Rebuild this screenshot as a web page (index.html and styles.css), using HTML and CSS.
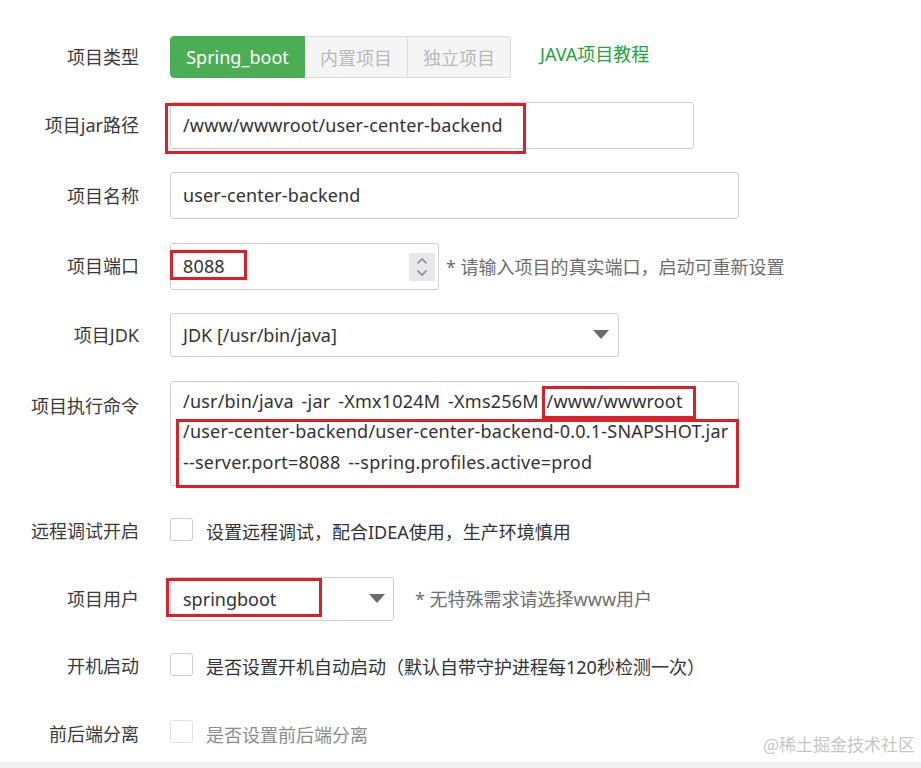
FILE: index.html
```html
<!DOCTYPE html>
<html lang="zh-CN">
<head>
<meta charset="utf-8">
<title>项目设置</title>
<link rel="stylesheet" href="styles.css">
</head>
<body>
<div class="page">
  <form class="form">
    <div class="row r-type">
      <label class="lbl">项目类型</label>
      <div class="ctrl">
        <div class="btn-group">
          <span class="btn active">Spring_boot</span>
          <span class="btn">内置项目</span>
          <span class="btn">独立项目</span>
        </div>
        <a class="tutorial">JAVA项目教程</a>
      </div>
    </div>

    <div class="row r-jar">
      <label class="lbl">项目jar路径</label>
      <div class="ctrl">
        <div class="field">
          <div class="input w-jar">/www/wwwroot/user-center-backend</div>
          <span class="mark mark-jar"></span>
        </div>
      </div>
    </div>

    <div class="row r-name">
      <label class="lbl">项目名称</label>
      <div class="ctrl">
        <div class="input w-name">user-center-backend</div>
      </div>
    </div>

    <div class="row r-port">
      <label class="lbl">项目端口</label>
      <div class="ctrl">
        <div class="field">
          <div class="input w-port">8088</div>
          <span class="spinner">
            <svg width="14" height="22" viewBox="0 0 14 22"><path d="M2.5 7.5 L7 3 L11.5 7.5" fill="none" stroke="#8a8a8a" stroke-width="1.6"/><path d="M2.5 14.5 L7 19 L11.5 14.5" fill="none" stroke="#8a8a8a" stroke-width="1.6"/></svg>
          </span>
          <span class="mark mark-port"></span>
        </div>
        <span class="hint">* 请输入项目的真实端口，启动可重新设置</span>
      </div>
    </div>

    <div class="row r-jdk">
      <label class="lbl">项目JDK</label>
      <div class="ctrl">
        <div class="select w-jdk">JDK [/usr/bin/java]<span class="caret"></span></div>
      </div>
    </div>

    <div class="row r-cmd">
      <label class="lbl lbl-top">项目执行命令</label>
      <div class="ctrl">
        <div class="field">
          <div class="textarea w-cmd">
            <div class="line">/usr/bin/java -jar -Xmx1024M -Xms256M <span class="hl">/www/wwwroot</span></div>
            <div class="line">/user-center-backend/user-center-backend-0.0.1-SNAPSHOT.jar</div>
            <div class="line">--server.port=8088 --spring.profiles.active=prod</div>
          </div>
          <span class="mark mark-cmd2"></span>
        </div>
      </div>
    </div>

    <div class="row r-check">
      <label class="lbl">远程调试开启</label>
      <div class="ctrl">
        <span class="checkbox"></span>
        <span class="check-text">设置远程调试，配合IDEA使用，生产环境慎用</span>
      </div>
    </div>

    <div class="row r-user">
      <label class="lbl">项目用户</label>
      <div class="ctrl">
        <div class="field">
          <div class="select w-user">springboot<span class="caret"></span></div>
          <span class="mark mark-user"></span>
        </div>
        <span class="hint hint-user">* 无特殊需求请选择www用户</span>
      </div>
    </div>

    <div class="row r-check">
      <label class="lbl">开机启动</label>
      <div class="ctrl">
        <span class="checkbox"></span>
        <span class="check-text">是否设置开机自动启动（默认自带守护进程每120秒检测一次）</span>
      </div>
    </div>

    <div class="row r-check">
      <label class="lbl">前后端分离</label>
      <div class="ctrl">
        <span class="checkbox light"></span>
        <span class="check-text muted">是否设置前后端分离</span>
      </div>
    </div>
  </form>
  <div class="watermark">@稀土掘金技术社区</div>
</div>
<div class="strip"></div>
</body>
</html>
```

FILE: styles.css
```css
* { box-sizing: border-box; }
html, body { margin: 0; padding: 0; background: #fff; }
body {
  font-family: "Noto Sans", "Noto Sans CJK SC", sans-serif;
  font-size: 18px;
  color: #333;
  width: 921px;
  height: 768px;
  overflow: hidden;
}
.page {
  position: relative;
  height: 762px;
  padding-top: 36px;
}
.strip { height: 6px; background: #f0f0f0; }
.form {
  display: flex;
  flex-direction: column;
  gap: 23.5px;
}
.row {
  display: flex;
  align-items: center;
}
.lbl {
  width: 139px;
  flex: none;
  text-align: right;
  color: #3a3a3a;
  line-height: 30px;
  white-space: nowrap;
  margin-right: 31px;
}
.lbl-top { align-self: flex-start; padding-top: 10px; }
.ctrl {
  display: flex;
  align-items: center;
}
.field { position: relative; }

/* button group */
.btn-group { display: flex; height: 42px; }
.btn {
  display: flex;
  align-items: center;
  justify-content: center;
  width: 103px;
  height: 42px;
  background: #f5f5f5;
  border: 1px solid #dcdcdc;
  border-left: none;
  color: #b9b9b9;
}
.btn:last-child { border-radius: 0 4px 4px 0; }
.btn.active {
  width: 135px;
  background: #4cae54;
  border: 1px solid #4cae54;
  color: #fff;
  border-radius: 4px 0 0 4px;
}
.tutorial {
  margin-left: 29px;
  margin-top: -8px;
  color: #20a53a;
}

/* inputs */
.input, .select, .textarea {
  border: 1px solid #cfcfcf;
  border-radius: 3px;
  background: #fff;
  color: #333;
  padding: 0 12px;
  white-space: nowrap;
}
.input { height: 47px; line-height: 45px; letter-spacing: 0.15px; }
.w-jar { width: 524px; }
.w-name { width: 569px; }
.w-port { width: 269px; }
.select {
  position: relative;
  height: 44px;
  line-height: 42px;
}
.w-jdk { width: 449px; }
.w-user { width: 224px; }
.caret {
  position: absolute;
  right: 9px;
  top: 16px;
  width: 0; height: 0;
  border-left: 8.5px solid transparent;
  border-right: 8.5px solid transparent;
  border-top: 9px solid #6b6b6b;
}
.w-user .caret { right: 8px; }
.textarea {
  width: 569px;
  height: 105px;
  padding: 4px 12px;
}
.line {
  line-height: 30.5px;
  white-space: nowrap;
  letter-spacing: 0.2px;
  word-spacing: 3px;
}
.hl {
  position: relative;
  display: inline-block;
}
.hl::after {
  content: "";
  position: absolute;
  left: -5px;
  right: -13px;
  top: 0;
  bottom: -3px;
  border: 3px solid #d8222b;
}

.spinner {
  position: absolute;
  right: 4px;
  top: 10px;
  width: 26px;
  height: 28px;
  background: #e8e8ec;
  display: flex;
  align-items: center;
  justify-content: center;
}

.hint {
  color: #6e6e6e;
  margin-left: 7px;
  white-space: nowrap;
}
.hint-user { margin-left: 21px; margin-top: -2px; }

/* checkboxes */
.r-check { height: 44px; }
.checkbox {
  width: 23px;
  height: 23px;
  border: 1px solid #cdcdcd;
  border-radius: 3px;
  background: #fff;
  margin-bottom: 4px;
  margin-right: 13px;
  flex: none;
}
.checkbox.light { border-color: #e2e2e2; }
.check-text { color: #333; white-space: nowrap; }
.check-text.muted { color: #8c8c8c; }

/* annotation marks */
.mark {
  position: absolute;
  border: 3px solid #d8222b;
  pointer-events: none;
}
.mark-jar { left: -5px; top: 1px; width: 361px; height: 51px; }
.mark-port { left: 0; top: 7px; width: 77px; height: 30px; }
.mark-user { left: -4px; top: 1px; width: 156px; height: 39px; }
.mark-cmd2 { left: 6px; top: 38px; width: 563px; height: 69px; }

.watermark {
  position: absolute;
  right: 6px;
  bottom: 6px;
  font-family: "Noto Sans CJK SC", sans-serif;
  font-size: 17px;
  color: #c6c6c6;
}
```
